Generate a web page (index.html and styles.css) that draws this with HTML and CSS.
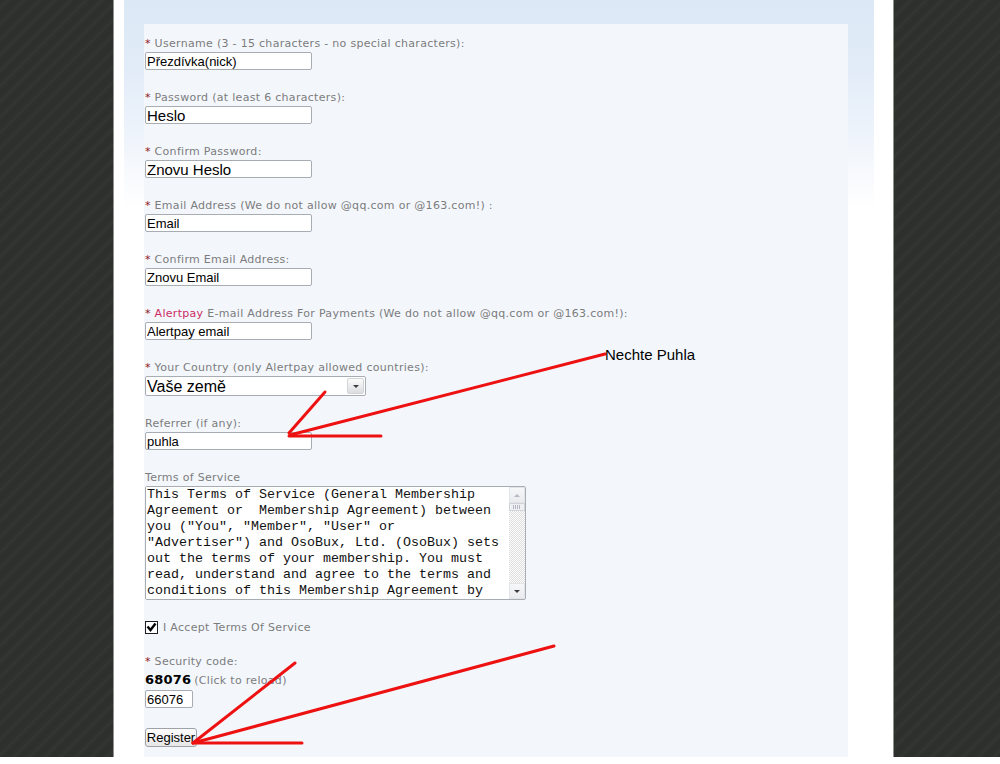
FILE: index.html
```html
<!DOCTYPE html>
<html lang="en">
<head>
<meta charset="utf-8">
<title>Register</title>
<link rel="stylesheet" href="styles.css">
</head>
<body>
<div class="bg">
  <div class="column">
    <div class="container">
      <form class="panel">
        <div class="field">
          <label class="lbl"><span class="req">*</span> Username (3 - 15 characters - no special characters):</label>
          <input class="txt" type="text" value="Přezdívka(nick)">
        </div>
        <div class="field">
          <label class="lbl"><span class="req">*</span> Password (at least 6 characters):</label>
          <input class="txt big" type="text" value="Heslo">
        </div>
        <div class="field">
          <label class="lbl"><span class="req">*</span> Confirm Password:</label>
          <input class="txt big" type="text" value="Znovu Heslo">
        </div>
        <div class="field">
          <label class="lbl"><span class="req">*</span> Email Address (We do not allow @qq.com or @163.com!) :</label>
          <input class="txt" type="text" value="Email">
        </div>
        <div class="field">
          <label class="lbl"><span class="req">*</span> Confirm Email Address:</label>
          <input class="txt" type="text" value="Znovu Email">
        </div>
        <div class="field">
          <label class="lbl"><span class="req">*</span> <span class="brand">Alertpay</span> E-mail Address For Payments (We do not allow @qq.com or @163.com!):</label>
          <input class="txt" type="text" value="Alertpay email">
        </div>
        <div class="field">
          <label class="lbl"><span class="req">*</span> Your Country (only Alertpay allowed countries):</label>
          <div class="sel">
            <select><option>Vaše země</option></select>
            <span class="sel-btn"><span class="tri-down"></span></span>
          </div>
        </div>
        <div class="field">
          <label class="lbl">Referrer (if any):</label>
          <input class="txt" type="text" value="puhla">
        </div>
        <div class="field">
          <label class="lbl">Terms of Service</label>
          <div class="tos">
            <textarea readonly>This Terms of Service (General Membership Agreement or  Membership Agreement) between you ("You", "Member", "User" or "Advertiser") and OsoBux, Ltd. (OsoBux) sets out the terms of your membership. You must read, understand and agree to the terms and conditions of this Membership Agreement by registering an account.</textarea>
            <div class="sb">
              <div class="sb-up"><span class="tri-up light"></span></div>
              <div class="sb-thumb"></div>
              <div class="sb-track"></div>
              <div class="sb-down"><span class="tri-down"></span></div>
            </div>
          </div>
        </div>
        <div class="accept">
          <span class="cb"><svg width="11" height="11" viewBox="0 0 11 11"><path d="M1.5 4.5 L4.5 8 L9.5 1.5" fill="none" stroke="#000" stroke-width="2.4"/></svg></span>
          <span class="lbl-inline">I Accept Terms Of Service</span>
        </div>
        <div class="field">
          <label class="lbl"><span class="req">*</span> Security code:</label>
          <div class="captcha"><b class="code">68076</b><span class="reload">(Click to reload)</span></div>
          <input class="txt small" type="text" value="66076">
        </div>
        <button type="button" class="btn">Register</button>
      </form>
    </div>
  </div>
  <svg class="marks" width="1000" height="757" viewBox="0 0 1000 757">
    <g stroke="#ee1111" stroke-width="3" stroke-linecap="round" fill="none">
      <line x1="605" y1="354" x2="290" y2="435"/>
      <line x1="325" y1="392" x2="289" y2="433"/>
      <line x1="289" y1="436" x2="381" y2="436"/>
      <line x1="295" y1="663" x2="193" y2="743"/>
      <line x1="554" y1="646" x2="193" y2="743"/>
      <line x1="193" y1="743" x2="302" y2="743"/>
    </g>
  </svg>
  <div class="note">Nechte Puhla</div>
</div>
</body>
</html>
```
FILE: styles.css
```css
html, body {
  margin: 0;
  padding: 0;
  background: #ffffff;
}

.bg {
  position: relative;
  height: 757px;
  overflow: hidden;
  background: repeating-linear-gradient(135deg, #2c2f2b 0, #2e312d 4px, #333731 6px, #2e312d 8px, #2c2f2b 11px);
}

.column {
  box-sizing: border-box;
  margin-left: 113px;
  width: 781px;
  height: 757px;
  border-left: 1px solid #8e918d;
  border-right: 1px solid #8e918d;
  background: #ffffff;
  padding: 0 19px 0 10px;
}

.container {
  box-sizing: border-box;
  height: 100%;
  padding: 24px 26px 0 20px;
  background: linear-gradient(to bottom, #dbe8f5 0, #e2ecf8 70px, #edf3fb 130px, #f8fafd 175px, #ffffff 210px);
}

.panel {
  box-sizing: border-box;
  height: 100%;
  padding: 12px 0 0 1px;
  background: #f3f7fc;
  margin: 0;
}

.field {
  margin-bottom: 20px;
}

.lbl, .lbl-inline, .reload {
  font-family: "DejaVu Sans", Verdana, sans-serif;
  font-size: 11px;
  letter-spacing: 0.3px;
  color: #7c7c7c;
}

.lbl {
  display: block;
  line-height: 15px;
  height: 14px;
  margin-bottom: 2px;
  white-space: nowrap;
}

.req {
  color: #8e1616;
}

.brand {
  color: #cc2c62;
}

.txt {
  display: block;
  box-sizing: border-box;
  width: 167px;
  height: 18px;
  margin: 0;
  border: 1px solid #a8adb4;
  border-radius: 2px;
  padding: 0 1px;
  background: #ffffff;
  font-family: "Liberation Sans", Arial, sans-serif;
  font-size: 13px;
  color: #000000;
}

.txt.big {
  font-size: 15px;
}

.txt.small {
  width: 48px;
}

.sel {
  box-sizing: border-box;
  display: flex;
  width: 221px;
  height: 20px;
  border: 1px solid #a8adb4;
  border-radius: 2px;
  background: #ffffff;
}

.sel select {
  appearance: none;
  -webkit-appearance: none;
  flex: 1;
  border: 0;
  margin: 0;
  padding: 0 1px;
  height: 18px;
  background: transparent;
  font-family: "Liberation Sans", Arial, sans-serif;
  font-size: 16px;
  color: #000000;
}

.sel-btn {
  width: 15px;
  margin: 1px 1px 1px 0;
  border: 1px solid #d2d4d8;
  border-radius: 2px;
  background: linear-gradient(to bottom, #fbfbfb, #dcdde0);
  display: flex;
  align-items: center;
  justify-content: center;
}

.tri-down {
  width: 0;
  height: 0;
  border-left: 3px solid transparent;
  border-right: 3px solid transparent;
  border-top: 3px solid #3c3c3c;
}

.tri-up {
  width: 0;
  height: 0;
  border-left: 3px solid transparent;
  border-right: 3px solid transparent;
  border-bottom: 3px solid #3c3c3c;
}

.tri-up.light {
  border-bottom-color: #b4bac4;
}

.tos {
  box-sizing: border-box;
  display: flex;
  width: 381px;
  height: 114px;
  border: 1px solid #a8adb4;
  border-radius: 2px;
  background: #ffffff;
}

.tos textarea {
  flex: 1;
  margin: 0;
  border: 0;
  outline: none;
  resize: none;
  overflow: hidden;
  padding: 0 5px 0 1px;
  font-family: "Liberation Mono", "Courier New", monospace;
  font-size: 13.333px;
  line-height: 16px;
  color: #111111;
  background: #ffffff;
}

.sb {
  width: 16px;
  display: flex;
  flex-direction: column;
  background: #f4f4f4;
}

.sb-up, .sb-down {
  height: 16px;
  display: flex;
  align-items: center;
  justify-content: center;
  background: linear-gradient(to bottom, #f6f7f9, #e9ebef);
  border: 1px solid #e2e4e8;
  box-sizing: border-box;
}

.sb-thumb {
  height: 8px;
  box-sizing: border-box;
  border: 1px solid #d0d3d8;
  background: repeating-linear-gradient(90deg, #b3b8c0 0 1px, #eef0f3 1px 2px) center / 8px 4px no-repeat, #eef0f3;
}

.sb-track {
  flex: 1;
  background: repeating-conic-gradient(#dcdcdc 0 25%, #ffffff 0 50%) 0 0 / 2px 2px;
}

.accept {
  display: flex;
  align-items: center;
  height: 14px;
  margin-bottom: 20px;
}

.cb {
  box-sizing: border-box;
  width: 13px;
  height: 13px;
  border: 1px solid #1e1e1e;
  background: #ffffff;
  display: flex;
  align-items: center;
  justify-content: center;
  margin-right: 5px;
}

.captcha {
  height: 18px;
  line-height: 18px;
  margin-bottom: 2px;
  white-space: nowrap;
}

.code {
  font-family: "DejaVu Sans", Verdana, sans-serif;
  font-weight: bold;
  font-size: 13px;
  letter-spacing: 0.2px;
  color: #000000;
}

.reload {
  margin-left: 3px;
}

.btn {
  display: block;
  box-sizing: border-box;
  width: 52px;
  height: 19px;
  padding: 0;
  margin: 0;
  border: 1px solid #9ea2a8;
  border-radius: 3px;
  background: linear-gradient(to bottom, #fdfdfd, #e6e6e6);
  font-family: "Liberation Sans", Arial, sans-serif;
  font-size: 13px;
  color: #000000;
}

.marks {
  position: absolute;
  left: 0;
  top: 0;
  pointer-events: none;
}

.note {
  position: absolute;
  left: 605px;
  top: 346px;
  font-family: "Liberation Sans", Arial, sans-serif;
  font-size: 15px;
  line-height: 17px;
  color: #000000;
  white-space: nowrap;
}
```
